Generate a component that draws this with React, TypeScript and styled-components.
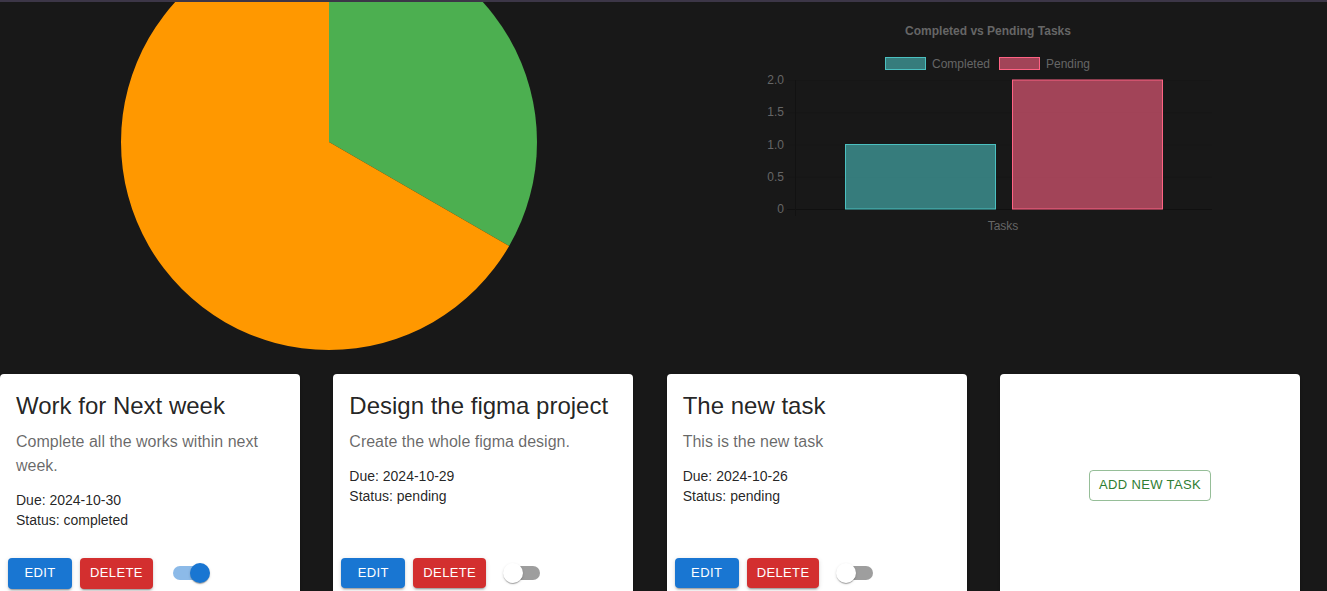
import React, { useState } from "react";
import styled, { createGlobalStyle } from "styled-components";

const GlobalStyle = createGlobalStyle`
  html, body {
    margin: 0;
    padding: 0;
    background: #181818;
    font-family: "Liberation Sans", Arial, sans-serif;
  }
  * { box-sizing: border-box; }
`;

const Page = styled.div`
  border-top: 2px solid #3c3647;
  background: #181818;
  min-height: 100vh;
`;

const ChartsRow = styled.section`
  display: flex;
  height: 372px;
  align-items: flex-start;
`;

const PieWrap = styled.div`
  padding-left: 121px;
  line-height: 0;
`;

const BarWrap = styled.div`
  margin-left: 203px;
  line-height: 0;
`;

const CardGrid = styled.section`
  display: grid;
  grid-template-columns: repeat(4, 300px);
  column-gap: 33.33px;
  align-items: start;
`;

const Card = styled.div<{ $center?: boolean }>`
  background: #fff;
  border-radius: 4px;
  box-shadow: 0px 2px 1px -1px rgba(0,0,0,0.2), 0px 1px 1px 0px rgba(0,0,0,0.14), 0px 1px 3px 0px rgba(0,0,0,0.12);
  display: flex;
  flex-direction: column;
  justify-content: ${(p) => (p.$center ? "center" : "flex-start")};
  align-items: ${(p) => (p.$center ? "center" : "stretch")};
  min-height: ${(p) => (p.$center ? "223px" : "226px")};
`;

const CardContent = styled.div`
  padding: 16px;
  flex: 1;
`;

const Title = styled.h5`
  margin: 0 0 0.35em;
  font-size: 24px;
  font-weight: 400;
  line-height: 1.334;
  color: rgba(0,0,0,0.87);
`;

const Description = styled.p`
  margin: 0;
  font-size: 16px;
  line-height: 1.5;
  color: rgba(0,0,0,0.6);
`;

const Meta = styled.div`
  margin-top: 12px;
  font-size: 14px;
  line-height: 1.43;
  color: rgba(0,0,0,0.87);
`;

const Actions = styled.div`
  display: flex;
  align-items: center;
  gap: 8px;
  padding: 8px;
`;

const ActionButton = styled.button<{ $color: string }>`
  font-family: "Liberation Sans", Arial, sans-serif;
  font-size: 13px;
  font-weight: 500;
  letter-spacing: 0.37px;
  line-height: 1.75;
  text-transform: uppercase;
  padding: 4px 10px;
  min-width: 64px;
  border: none;
  border-radius: 4px;
  color: #fff;
  background: ${(p) => p.$color};
  box-shadow: 0px 3px 1px -2px rgba(0,0,0,0.2), 0px 2px 2px 0px rgba(0,0,0,0.14), 0px 1px 5px 0px rgba(0,0,0,0.12);
  cursor: pointer;
`;

const OutlinedButton = styled.button`
  font-family: "Liberation Sans", Arial, sans-serif;
  font-size: 13px;
  font-weight: 500;
  letter-spacing: 0.37px;
  line-height: 1.75;
  text-transform: uppercase;
  padding: 3px 9px;
  min-width: 64px;
  border: 1px solid rgba(46,125,50,0.5);
  border-radius: 4px;
  color: #2e7d32;
  background: transparent;
  cursor: pointer;
`;

const SwitchRoot = styled.span`
  position: relative;
  display: inline-block;
  width: 58px;
  height: 38px;
  padding: 12px;
  cursor: pointer;
  flex-shrink: 0;
`;

const Track = styled.span<{ $on: boolean }>`
  display: block;
  width: 100%;
  height: 100%;
  border-radius: 7px;
  background: ${(p) => (p.$on ? "#1976d2" : "#000")};
  opacity: ${(p) => (p.$on ? 0.5 : 0.38)};
`;

const Thumb = styled.span<{ $on: boolean }>`
  position: absolute;
  top: 9px;
  left: ${(p) => (p.$on ? "29px" : "9px")};
  width: 20px;
  height: 20px;
  border-radius: 50%;
  background: ${(p) => (p.$on ? "#1976d2" : "#fff")};
  box-shadow: 0px 2px 1px -1px rgba(0,0,0,0.2), 0px 1px 1px 0px rgba(0,0,0,0.14), 0px 1px 3px 0px rgba(0,0,0,0.12);
`;

const Toggle: React.FC<{ initial: boolean }> = ({ initial }) => {
  const [on, setOn] = useState(initial);
  return (
    <SwitchRoot onClick={() => setOn(!on)} role="switch" aria-checked={on}>
      <Track $on={on} />
      <Thumb $on={on} />
    </SwitchRoot>
  );
};

const PieChart = () => {
  const cx = 329;
  const cy = 142;
  const r = 208;
  const ex = cx + r * Math.sin((120 * Math.PI) / 180);
  const ey = cy - r * Math.cos((120 * Math.PI) / 180);
  return (
    <svg width={416} height={348} viewBox="121 2 416 348">
      <path d={`M${cx},${cy} L${cx},${cy - r} A${r},${r} 0 0 1 ${ex},${ey} Z`} fill="#4caf50" />
      <path d={`M${cx},${cy} L${ex},${ey} A${r},${r} 0 1 1 ${cx},${cy - r} Z`} fill="#ff9800" />
    </svg>
  );
};

const BarChart = () => {
  const x0 = 795;
  const x1 = 1212;
  const yTop = 80;
  const yZero = 209;
  const unit = (yZero - yTop) / 2;
  const ticks = [
    { v: 2, l: "2.0" },
    { v: 1.5, l: "1.5" },
    { v: 1, l: "1.0" },
    { v: 0.5, l: "0.5" },
    { v: 0, l: "0" },
  ];
  const font = { fontFamily: "'Liberation Sans', Arial, sans-serif" };
  return (
    <svg width={480} height={240} viewBox="740 2 480 240" style={font}>
      <text x={988} y={35} textAnchor="middle" fontSize={12} fontWeight="bold" fill="#666">
        Completed vs Pending Tasks
      </text>
      <rect x={885.5} y={57.5} width={40} height={12} fill="rgba(75,192,192,0.6)" stroke="rgb(75,192,192)" strokeWidth={1} />
      <text x={932} y={68} fontSize={12} fill="#666">Completed</text>
      <rect x={999.5} y={57.5} width={40} height={12} fill="rgba(255,99,132,0.6)" stroke="rgb(255,99,132)" strokeWidth={1} />
      <text x={1046} y={68} fontSize={12} fill="#666">Pending</text>
      {ticks.map((t) => {
        const y = yZero - t.v * unit;
        return (
          <g key={t.l}>
            <line x1={x0 - 8} x2={x1} y1={y + 0.5} y2={y + 0.5} stroke={t.v === 0 ? "#101010" : "#161616"} strokeWidth={1} />
            <text x={784} y={y + 4} textAnchor="end" fontSize={12} fill="#666">{t.l}</text>
          </g>
        );
      })}
      <line x1={x0 + 0.5} x2={x0 + 0.5} y1={yTop} y2={yZero + 7} stroke="#121212" strokeWidth={1} />
      <rect x={845.5} y={yZero - unit} width={150} height={unit} fill="rgba(75,192,192,0.6)" stroke="rgb(75,192,192)" strokeWidth={1} />
      <rect x={1012.5} y={yTop} width={150} height={yZero - yTop} fill="rgba(255,99,132,0.6)" stroke="rgb(255,99,132)" strokeWidth={1} />
      <text x={1003} y={230} textAnchor="middle" fontSize={12} fill="#666">Tasks</text>
    </svg>
  );
};

type Task = {
  title: string;
  description: string;
  due: string;
  status: "completed" | "pending";
};

const tasks: Task[] = [
  {
    title: "Work for Next week",
    description: "Complete all the works within next week.",
    due: "2024-10-30",
    status: "completed",
  },
  {
    title: "Design the figma project",
    description: "Create the whole figma design.",
    due: "2024-10-29",
    status: "pending",
  },
  {
    title: "The new task",
    description: "This is the new task",
    due: "2024-10-26",
    status: "pending",
  },
];

export default function App() {
  return (
    <>
      <GlobalStyle />
      <Page>
        <ChartsRow>
          <PieWrap>
            <PieChart />
          </PieWrap>
          <BarWrap>
            <BarChart />
          </BarWrap>
        </ChartsRow>
        <CardGrid>
          {tasks.map((t) => (
            <Card key={t.title}>
              <CardContent>
                <Title>{t.title}</Title>
                <Description>{t.description}</Description>
                <Meta>
                  <div>Due: {t.due}</div>
                  <div>Status: {t.status}</div>
                </Meta>
              </CardContent>
              <Actions>
                <ActionButton $color="#1976d2">Edit</ActionButton>
                <ActionButton $color="#d32f2f">Delete</ActionButton>
                <Toggle initial={t.status === "completed"} />
              </Actions>
            </Card>
          ))}
          <Card $center>
            <OutlinedButton>Add New Task</OutlinedButton>
          </Card>
        </CardGrid>
      </Page>
    </>
  );
}
